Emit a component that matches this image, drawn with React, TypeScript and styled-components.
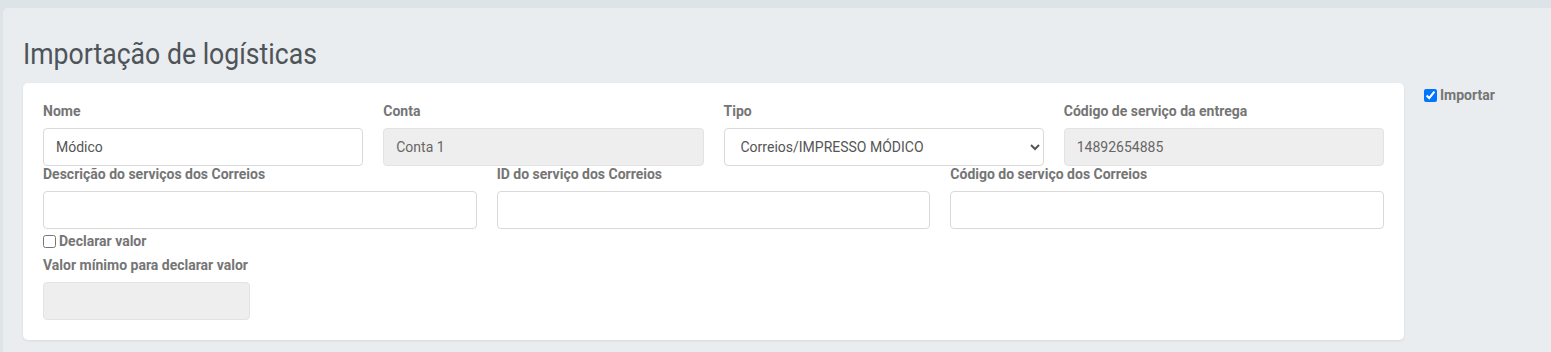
import React from 'react'
import styled, { createGlobalStyle } from 'styled-components'

const GlobalStyle = createGlobalStyle`
  html, body {
    margin: 0;
    padding: 0;
    background: #dde4e7;
    font-family: Roboto, "Liberation Sans", Arial, sans-serif;
  }
`

const Page = styled.div`
  padding: 8px 0 0 3px;
  height: 352px;
  box-sizing: border-box;
  overflow: hidden;
`

const Panel = styled.div`
  background: #e9edf0;
  border-radius: 5px 0 0 0;
  height: 100%;
  padding: 0 0 0 20px;
`

const Title = styled.h1`
  margin: 0;
  padding-top: 28px;
  height: 47px;
  font-size: 30px;
  font-weight: 400;
  line-height: 36px;
  color: #4f5459;
  transform: scaleX(0.888);
  transform-origin: left center;
  white-space: nowrap;
`

const Layout = styled.div`
  display: flex;
  align-items: flex-start;
  gap: 20px;
`

const Card = styled.div`
  width: 1381px;
  box-sizing: border-box;
  background: #fff;
  border-radius: 5px;
  box-shadow: 0 1px 3px rgba(0, 0, 0, 0.08);
  padding: 20px;
`

const Row = styled.div<{ $cols: number }>`
  display: grid;
  grid-template-columns: repeat(${p => p.$cols}, 1fr);
  column-gap: 20px;
`

const Field = styled.div<{ $width?: number }>`
  display: flex;
  flex-direction: column;
  width: ${p => (p.$width ? `${p.$width}px` : 'auto')};
`

const Label = styled.label`
  display: block;
  font-size: 14px;
  font-weight: 700;
  line-height: 17px;
  color: #757575;
  margin-bottom: 8px;
`

const Input = styled.input`
  box-sizing: border-box;
  height: 38px;
  width: 100%;
  border: 1px solid #d9d9d9;
  border-radius: 4px;
  padding: 0 12px;
  font-family: inherit;
  font-size: 14px;
  color: #555;
  background: #fff;
  outline: none;

  &:disabled {
    background: #eeeeee;
    border-color: #e3e3e3;
    color: #666;
  }
`

const Select = styled.select`
  box-sizing: border-box;
  height: 38px;
  width: 100%;
  border: 1px solid #d9d9d9;
  border-radius: 4px;
  padding: 0 14px 0 12px;
  font-family: inherit;
  font-size: 14px;
  color: #555;
  background: #fff;
  outline: none;
`

const CheckRow = styled.label<{ $mt?: number }>`
  display: flex;
  align-items: center;
  gap: 3px;
  margin-top: ${p => p.$mt ?? 0}px;
  font-size: 14px;
  font-weight: 700;
  line-height: 17px;
  color: #757575;

  input {
    margin: 0;
    width: 13px;
    height: 13px;
  }
`

const Bottom = styled.div`
  margin-top: 7px;
`

const Side = styled.div`
  padding-top: 4px;
`

export default function App() {
  return (
    <>
      <GlobalStyle />
      <Page>
        <Panel>
          <Title>Importação de logísticas</Title>
          <Layout>
            <Card>
              <Row $cols={4}>
                <Field>
                  <Label>Nome</Label>
                  <Input defaultValue="Módico" />
                </Field>
                <Field>
                  <Label>Conta</Label>
                  <Input disabled defaultValue="Conta 1" />
                </Field>
                <Field>
                  <Label>Tipo</Label>
                  <Select defaultValue="impresso">
                    <option value="impresso">Correios/IMPRESSO MÓDICO</option>
                  </Select>
                </Field>
                <Field>
                  <Label>Código de serviço da entrega</Label>
                  <Input disabled defaultValue="14892654885" />
                </Field>
              </Row>
              <Row $cols={3}>
                <Field>
                  <Label>Descrição do serviços dos Correios</Label>
                  <Input />
                </Field>
                <Field>
                  <Label>ID do serviço dos Correios</Label>
                  <Input />
                </Field>
                <Field>
                  <Label>Código do serviço dos Correios</Label>
                  <Input />
                </Field>
              </Row>
              <CheckRow $mt={4}>
                <input type="checkbox" />
                Declarar valor
              </CheckRow>
              <Bottom>
                <Field $width={207}>
                  <Label>Valor mínimo para declarar valor</Label>
                  <Input disabled />
                </Field>
              </Bottom>
            </Card>
            <Side>
              <CheckRow>
                <input type="checkbox" defaultChecked />
                Importar
              </CheckRow>
            </Side>
          </Layout>
        </Panel>
      </Page>
    </>
  )
}
